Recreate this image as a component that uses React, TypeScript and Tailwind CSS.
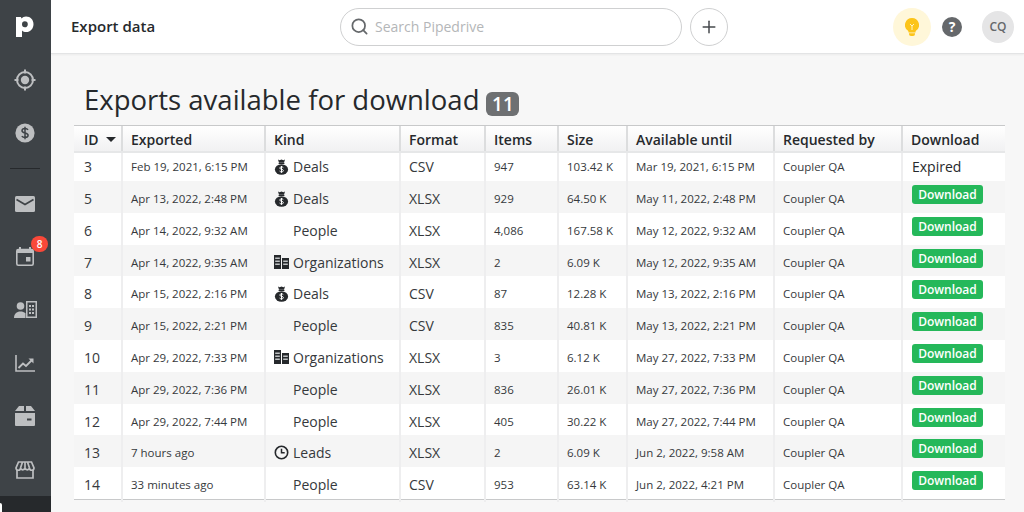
import React from "react";
import { Search, Plus } from "lucide-react";

const Bag = () => (
  <svg width="15" height="16" viewBox="0 0 15 16" className="shrink-0">
    <path d="M4 0.500l1.600.8L7.500.4l1.900.9L11 .5l-1 3.200H5z" fill="#26292c" />
    <rect x="4.600" y="3.900" width="5.800" height="1.100" fill="#26292c" />
    <ellipse cx="7.500" cy="10.500" rx="6.600" ry="5.200" fill="#26292c" />
    <path d="M9.300 8.600c-.4-.5-1-.7-1.800-.7-1 0-1.700.5-1.700 1.200 0 1.600 3.600.8 3.600 2.500 0 .8-.8 1.300-1.900 1.300-.8 0-1.500-.3-1.900-.8M7.500 7v6.800" fill="none" stroke="#fff" strokeWidth="1" />
  </svg>
);
const Org = () => (
  <svg width="15" height="14" viewBox="0 0 15 14" className="shrink-0">
    <path d="M0 0h7v14H0zM8 3h7v11H8z" fill="#26292c" />
    <path d="M1.200 2.500h4.600v1.400H1.200zM1.200 5.500h4.600v1.400H1.200zM1.200 8.500h4.600v1.400H1.200zM9.200 5.500h4.600v1.400H9.200zM9.200 8.500h4.600v1.400H9.200z" fill="#bfc2c4" />
  </svg>
);
const Clock = () => (
  <svg width="15" height="15" viewBox="0 0 15 15" className="shrink-0">
    <circle cx="7.500" cy="7.500" r="6.200" fill="none" stroke="#26292c" strokeWidth="1.600" />
    <path d="M7.500 3.800v4h3.200" fill="none" stroke="#26292c" strokeWidth="1.500" />
  </svg>
);

type Row = [string, string, string, string, string, string, string, string];
const rows: Row[] = [
  ["3", "Feb 19, 2021, 6:15 PM", "Deals", "CSV", "947", "103.42 K", "Mar 19, 2021, 6:15 PM", ""],
  ["5", "Apr 13, 2022, 2:48 PM", "Deals", "XLSX", "929", "64.50 K", "May 11, 2022, 2:48 PM", "d"],
  ["6", "Apr 14, 2022, 9:32 AM", "People", "XLSX", "4,086", "167.58 K", "May 12, 2022, 9:32 AM", "d"],
  ["7", "Apr 14, 2022, 9:35 AM", "Organizations", "XLSX", "2", "6.09 K", "May 12, 2022, 9:35 AM", "d"],
  ["8", "Apr 15, 2022, 2:16 PM", "Deals", "CSV", "87", "12.28 K", "May 13, 2022, 2:16 PM", "d"],
  ["9", "Apr 15, 2022, 2:21 PM", "People", "CSV", "835", "40.81 K", "May 13, 2022, 2:21 PM", "d"],
  ["10", "Apr 29, 2022, 7:33 PM", "Organizations", "XLSX", "3", "6.12 K", "May 27, 2022, 7:33 PM", "d"],
  ["11", "Apr 29, 2022, 7:36 PM", "People", "XLSX", "836", "26.01 K", "May 27, 2022, 7:36 PM", "d"],
  ["12", "Apr 29, 2022, 7:44 PM", "People", "XLSX", "405", "30.22 K", "May 27, 2022, 7:44 PM", "d"],
  ["13", "7 hours ago", "Leads", "XLSX", "2", "6.09 K", "Jun 2, 2022, 9:58 AM", "d"],
  ["14", "33 minutes ago", "People", "CSV", "953", "63.14 K", "Jun 2, 2022, 4:21 PM", "d"],
];
const heads = ["ID", "Exported", "Kind", "Format", "Items", "Size", "Available until", "Requested by", "Download"];
const cols = "grid grid-cols-[47px_143px_135px_85px_73px_69px_147px_128px_104px]";

const KindIcon = ({ k }: { k: string }) =>
  k === "Deals" ? <Bag /> : k === "Organizations" ? <Org /> : k === "Leads" ? <Clock /> : <span className="w-[15px] shrink-0" />;

const c = "#bdbfc1";
const nav: React.ReactNode[] = [
  <svg key="t" width="24" height="24" viewBox="0 0 24 24" fill="none" stroke={c}>
    <circle cx="12" cy="12" r="8" strokeWidth="2" />
    <circle cx="12" cy="12" r="4.200" fill={c} stroke="none" />
    <path d="M12 1.500v4M12 18.500v4M1.500 12h4M18.500 12h4" strokeWidth="2" />
  </svg>,
  <svg key="d" width="20" height="20" viewBox="0 0 20 20">
    <circle cx="10" cy="10" r="9.600" fill={c} />
    <path d="M13 6.900C12.400 6 11.400 5.600 10 5.600c-1.800 0-3 .9-3 2.200 0 2.900 6.100 1.500 6.100 4.500 0 1.300-1.300 2.200-3.100 2.200-1.400 0-2.500-.5-3.200-1.400M10 3.800v12.400" fill="none" stroke="#3e4347" strokeWidth="1.500" />
  </svg>,
];
const nav2: React.ReactNode[] = [
  <svg key="m" width="20" height="16" viewBox="0 0 20 16">
    <rect width="20" height="16" rx="1.500" fill={c} />
    <path d="M1.500 3.500L10 8.500l8.500-5" fill="none" stroke="#3e4347" strokeWidth="1.700" />
  </svg>,
  <svg key="c" width="18" height="19" viewBox="0 0 18 19" fill="none">
    <path d="M4 0v4M14 0v4" stroke={c} strokeWidth="2" />
    <rect x=".8" y="2.500" width="16.400" height="15.700" rx="1.500" stroke={c} strokeWidth="1.600" />
    <path d="M1 3h16v3H1z" fill={c} />
    <rect x="10" y="10" width="4.500" height="4.500" fill={c} />
  </svg>,
  <svg key="p" width="23" height="18" viewBox="0 0 23 18">
    <circle cx="6.500" cy="5" r="3.800" fill={c} />
    <path d="M0 17c0-4 2.500-6.500 6.500-6.500 2 0 3.500.6 5 1.800V17z" fill={c} />
    <path d="M12 0h11v17H12zM13.500 1.500v14h8v-14z" fill={c} fillRule="evenodd" />
    <path d="M15 4h2v2h-2zM18 4h2v2h-2zM15 7.500h2v2h-2zM18 7.500h2v2h-2zM15 11h2v2h-2zM18 11h2v2h-2z" fill={c} />
  </svg>,
  <svg key="ch" width="20" height="17" viewBox="0 0 20 17" fill="none" stroke={c}>
    <path d="M1 0v16h19" strokeWidth="1.600" />
    <path d="M3.500 13l4.500-4.500 3 2.500 6-6" strokeWidth="1.800" />
    <path d="M13.500 3.500h5v5z" fill={c} stroke="none" />
  </svg>,
  <svg key="b" width="20" height="20" viewBox="0 0 20 20">
    <path d="M4 0h5v5H0zM11 0h5l4 5h-9zM0 7h20v12a1 1 0 01-1 1H1a1 1 0 01-1-1z" fill={c} />
    <rect x="12" y="12.500" width="4.500" height="2" fill="#3e4347" />
  </svg>,
  <svg key="s" width="20" height="18" viewBox="0 0 20 18" fill="none" stroke={c} strokeWidth="1.700">
    <path d="M3.500 1h13L19 7a2.200 2.200 0 01-4.500 0 2.300 2.300 0 01-4.500 0 2.300 2.300 0 01-4.500 0A2.200 2.200 0 011 7zM7.500 1L5.500 7M12.500 1l2 6M10 1v6" />
    <path d="M2 9v8h16V9" />
  </svg>,
];

export default function App() {
  return (
    <div className="w-[1024px] h-[512px] overflow-hidden flex bg-[#f7f7f7] text-[#26292c] font-['Open_Sans','Noto_Sans',sans-serif]">
      <aside className="w-[51px] shrink-0 h-full bg-[#3e4347] flex flex-col items-center relative pr-px">
        <div className="h-[53px] w-full flex items-center justify-center pb-[2px]">
          <svg width="18" height="22" viewBox="0 0 18 22">
            <path d="M0 2h5l.4 1.600C6.600 2.200 8.200 1.500 10 1.500c4.500 0 7.500 3.300 7.500 7.700S14.300 17 10.200 17c-1.700 0-3.200-.6-4.200-1.600V22H0V6.500C0 6 0 5.700-.3 5.500H0zM8.800 6.200C7 6.200 6 7.400 6 9.300s1 3 2.800 3c1.900 0 3-1.200 3-3.100s-1-3-3-3z" fill="#fff" fillRule="evenodd" />
          </svg>
        </div>
        {nav.map((n, i) => (
          <div key={i} className="h-[53.500px] w-full flex items-center justify-center">{n}</div>
        ))}
        <div className="h-[17px] w-full flex items-center justify-center">
          <div className="w-[30px] h-px bg-[#26292c]" />
        </div>
        {nav2.map((n, i) => (
          <div key={i} className="h-[53.200px] w-full flex items-center justify-center relative">
            {n}
            {i === 1 && (
              <span className="absolute left-[31px] top-[6px] w-[17px] h-[16px] rounded-full bg-[#f94839] text-white text-[10px] font-semibold leading-[16px] text-center">8</span>
            )}
          </div>
        ))}
        <div className="absolute left-0 right-0 bottom-0 h-[16px] bg-[#26292c]">
          <div className="absolute left-0 top-[7px] w-[2px] h-[9px] bg-white rounded-tr-sm" />
        </div>
      </aside>

      <main className="flex-1 min-w-0 flex flex-col">
        <header className="h-[54px] shrink-0 bg-white border-b border-[#e3e4e5] shadow-[0_1px_2px_rgba(0,0,0,0.05)] flex items-center pl-5 pr-[10px]">
          <h1 className="w-[269px] shrink-0 text-[15px] font-semibold leading-none">Export data</h1>
          <div className="w-[342px] h-[38px] shrink-0 rounded-full border border-[#cfd0d1] flex items-center pl-[9px] gap-[6px]">
            <Search size={19} strokeWidth={2.200} className="text-[#65686b]" />
            <span className="text-[14px] text-[#b4b6b8]">Search Pipedrive</span>
          </div>
          <div className="ml-2 w-[38px] h-[38px] shrink-0 rounded-full border border-[#cfd0d1] flex items-center justify-center">
            <Plus size={20} strokeWidth={1.800} className="text-[#46494c]" />
          </div>
          <div className="flex-1" />
          <div className="w-[38px] h-[38px] rounded-full bg-[#fff7d9] flex items-center justify-center">
            <svg width="14" height="18" viewBox="0 0 14 18">
              <path d="M7 0a7 7 0 00-4.200 12.600c.5.4.7.9.7 1.400v.5h7V14c0-.5.2-1 .7-1.400A7 7 0 007 0z" fill="#fcc419" />
              <path d="M4 15.300h6V16a2 2 0 01-2 2H6a2 2 0 01-2-2z" fill="#fcc419" />
              <path d="M5 6l2 2 2-2M7 8v4" fill="none" stroke="#fff3c4" strokeWidth="1" />
            </svg>
          </div>
          <div className="ml-[11px] w-5 h-5 rounded-full bg-[#65686b] text-white text-[14px] font-bold leading-5 text-center">?</div>
          <div className="ml-5 w-[32px] h-[32px] rounded-full bg-[#e5e5e6] text-[#65686b] text-[12px] font-semibold leading-[32px] text-center">CQ</div>
        </header>

        <section className="pl-[23px] pt-[21px]">
          <div className="flex items-center pl-[10px] h-[50px]">
            <h2 className="text-[27.500px] font-medium leading-none text-[#26292c]">Exports available for download</h2>
            <span className="ml-[7px] mt-[8px] w-[33px] h-[24px] rounded-[6px] bg-[#6e7072] text-white text-[19px] leading-[24px] font-semibold text-center">11</span>
          </div>
          <div className="w-[931px] border-b border-[#c8c9ca]">
            <div className={`${cols} h-[28px] border-t border-b-2 border-t-[#c8c9ca] border-b-[#e6e7e8] bg-gradient-to-b from-[#ffffff] to-[#f1f1f2]`}>
              {heads.map((h, i) => (
                <div key={h} className={`pt-[2px] flex items-center gap-[7px] text-[14px] font-semibold leading-none ${i ? "pl-[8px] border-l-2 border-[#dcddde]" : "pl-[10px]"}`}>
                  {h}
                  {i === 0 && <span className="w-0 h-0 border-x-[5px] border-x-transparent border-t-[5px] border-t-[#26292c]" />}
                </div>
              ))}
            </div>
            {rows.map((r, i) => (
              <div key={r[0]} className={`${cols} ${i === 0 ? "h-[28px]" : "h-[31.800px]"} ${i % 2 ? "bg-[#f5f5f5]" : "bg-white"}`}>
                <Cell first big top={i}>{r[0]}</Cell>
                <Cell small top={i}>{r[1]}</Cell>
                <Cell big top={i}>
                  <span className="flex items-center gap-[4px]"><KindIcon k={r[2]} />{r[2]}</span>
                </Cell>
                <Cell big top={i}>{r[3]}</Cell>
                <Cell small top={i}>{r[4]}</Cell>
                <Cell small top={i}>{r[5]}</Cell>
                <Cell small top={i}>{r[6]}</Cell>
                <Cell small top={i}>Coupler QA</Cell>
                <div className="pl-[9px] border-l-2 border-[#eeeeef]">
                  {r[7] ? (
                    <button className="mt-[4px] w-[71px] h-[19px] rounded-[3px] bg-[#25b85a] text-white text-[12px] font-semibold leading-[19px] text-center">Download</button>
                  ) : (
                    <span className="text-[14px] leading-[28px]">Expired</span>
                  )}
                </div>
              </div>
            ))}
          </div>
        </section>
      </main>
    </div>
  );
}

function Cell({ children, big, small, first, top }: { children: React.ReactNode; big?: boolean; small?: boolean; first?: boolean; top: number }) {
  return (
    <div className={`${first ? "pl-[10px]" : "pl-[8px] border-l-2 border-[#eeeeef]"} ${big ? "text-[14px]" : ""} ${small ? "text-[11.500px]" : ""} ${top === 0 ? "leading-[27px]" : "leading-[35px]"} whitespace-nowrap text-[#36393c]`}>
      {children}
    </div>
  );
}
